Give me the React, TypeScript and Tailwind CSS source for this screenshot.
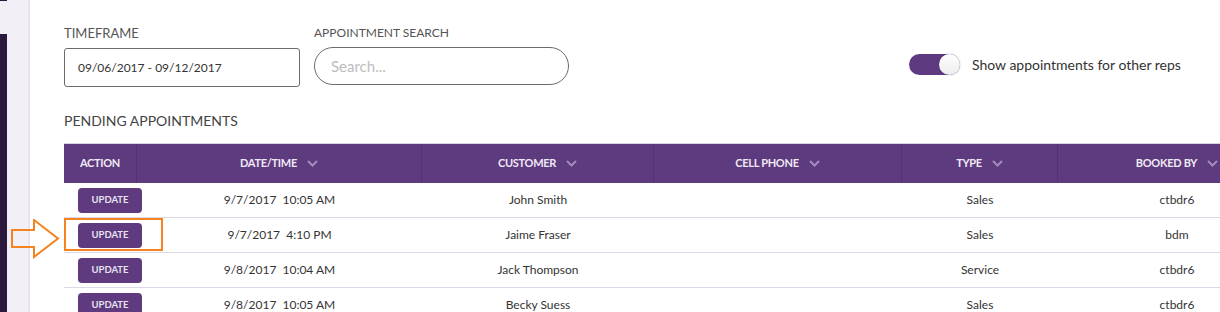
import React from "react";

const rows = [
  { date: "9/7/2017\u00a0\u00a010:05 AM", customer: "John Smith", phone: "", type: "Sales", by: "ctbdr6" },
  { date: "9/7/2017\u00a0\u00a04:10 PM", customer: "Jaime Fraser", phone: "", type: "Sales", by: "bdm" },
  { date: "9/8/2017\u00a0\u00a010:04 AM", customer: "Jack Thompson", phone: "", type: "Service", by: "ctbdr6" },
  { date: "9/8/2017\u00a0\u00a010:05 AM", customer: "Becky Suess", phone: "", type: "Sales", by: "ctbdr6" },
];

const Chevron = () => (
  <svg width="11" height="7" viewBox="0 0 11 7" className="ml-[10px] shrink-0">
    <polyline points="1,1 5.5,5.5 10,1" fill="none" stroke="#a48bbd" strokeWidth="2" />
  </svg>
);

const headers = [
  { label: "ACTION", chev: false },
  { label: "DATE/TIME", chev: true },
  { label: "CUSTOMER", chev: true },
  { label: "CELL PHONE", chev: true },
  { label: "TYPE", chev: true },
  { label: "BOOKED BY", chev: true },
];

export default function App() {
  return (
    <div
      className="relative flex h-[312px] w-[1220px] overflow-hidden bg-white"
      style={{ fontFamily: "Lato, 'Open Sans', sans-serif" }}
    >
      {/* sidebar strip */}
      <div className="flex w-[7px] shrink-0 flex-col">
        <div className="h-[1px] bg-[#2b1a3c]" />
        <div className="h-[33px] bg-[#f2eff7]" />
        <div className="flex-1 bg-[#2b1a3c]" />
      </div>
      <div className="w-[23px] shrink-0 bg-[#f2eff7]" />

      {/* main */}
      <div className="relative min-w-0 flex-1 bg-white pl-[34px] pt-[26px] shadow-[-1px_0_2px_rgba(120,100,150,0.15)]">
        <div className="flex items-start">
          <div className="flex flex-col">
            <div className="h-[14px] text-[13px] leading-[14px] text-[#555]">TIMEFRAME</div>
            <div className="mt-[8px] flex h-[39px] w-[236px] items-center rounded-[3px] border border-[#6b6b6b] pl-[13px] text-[12px] text-[#333]">
              09/06/2017 - 09/12/2017
            </div>
          </div>
          <div className="ml-[14px] flex flex-col">
            <div className="h-[14px] text-[12px] leading-[14px] text-[#555]">APPOINTMENT SEARCH</div>
            <div className="mt-[7px] flex h-[38px] w-[255px] items-center rounded-full border border-[#6b6b6b] pl-[16px] text-[15px] text-[#bdbdbd]">
              Search...
            </div>
          </div>
          <div className="ml-[340px] mt-[28px] flex items-center">
            <div className="flex h-[21px] w-[51px] items-center justify-end rounded-full bg-[#5e3a80]">
              <div className="h-[21px] w-[21px] rounded-full bg-gradient-to-b from-white to-[#ececec] shadow-[0_0_2px_rgba(0,0,0,0.25)]" />
            </div>
            <span className="ml-[12px] text-[14px] text-[#333]">Show appointments for other reps</span>
          </div>
        </div>

        <div className="mt-[27px] h-[14px] text-[14px] leading-[14px] text-[#444]">PENDING APPOINTMENTS</div>

        <div className="relative mt-[15px] w-[1232px]">
          <div className="grid h-[40px] grid-cols-[73px_285px_232px_248px_156px_238px] border-t border-[#d8d2e2] bg-[#5e3a7e]">
            {headers.map((h, i) => (
              <div
                key={h.label}
                className={
                  "flex items-center justify-center text-[11px] font-bold tracking-[-0.3px] text-[#efe9f5] " +
                  (i < headers.length - 1 ? "border-r border-[#52326f]" : "")
                }
              >
                {h.label}
                {h.chev && <Chevron />}
              </div>
            ))}
          </div>
          {rows.map((r) => (
            <div
              key={r.customer}
              className="grid h-[35px] grid-cols-[73px_285px_232px_248px_156px_238px] items-center border-b border-[#dcd8e6] text-[12px] text-[#333]"
            >
              <div className="flex justify-start pl-[14px]">
                <div className="flex h-[25px] w-[64px] shrink-0 items-center justify-center rounded-[4px] bg-[#5f3a7f] text-[9.5px] font-bold text-[#e8e2f0]">
                  UPDATE
                </div>
              </div>
              <div className="text-center">{r.date}</div>
              <div className="text-center">{r.customer}</div>
              <div className="text-center">{r.phone}</div>
              <div className="text-center">{r.type}</div>
              <div className="text-center">{r.by}</div>
            </div>
          ))}
          {/* highlight box */}
          <div className="absolute left-0 top-[75px] h-[33px] w-[99px] border-2 border-[#f5831f]" />
        </div>
      </div>

      {/* arrow */}
      <svg className="absolute left-[11px] top-[219px]" width="50" height="40" viewBox="0 0 50 40">
        <polygon
          points="1,11 23,11 23,1 47,19.5 23,38 23,28 1,28"
          fill="none"
          stroke="#f5831f"
          strokeWidth="2"
          strokeLinejoin="miter"
        />
      </svg>
    </div>
  );
}
